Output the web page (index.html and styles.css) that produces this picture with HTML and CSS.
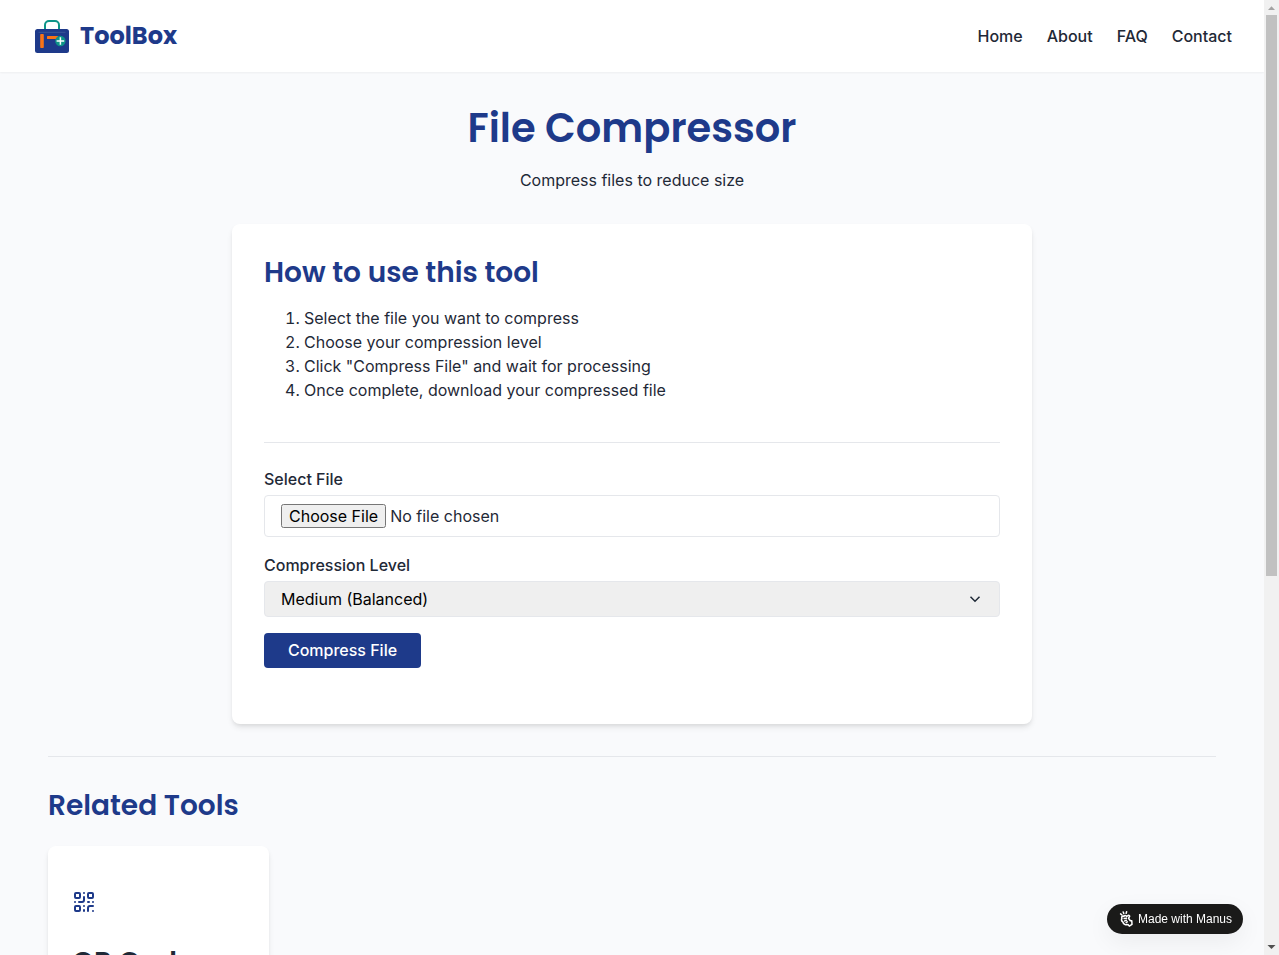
FILE: index.html
```html
<!DOCTYPE html>
<html lang="en">
<head>
<meta charset="utf-8">
<title>File Compressor - ToolBox</title>
<link rel="stylesheet" href="styles.css">
</head>
<body>
<div class="page">
  <header class="header">
    <a class="brand">
      <svg class="brand-logo" viewBox="0 0 40 40" fill="none">
        <path d="M13 13V9a4 4 0 0 1 4-4h6a4 4 0 0 1 4 4v4" stroke="#0d9488" stroke-width="2"/>
        <rect x="3" y="13" width="34" height="24" rx="2.500" fill="#1e3a8a"/>
        <path d="M6.500 16.300h27" stroke="#45639f" stroke-width=".7"/>
        <rect x="8.200" y="18" width="3.600" height="14" rx=".8" fill="#f97316"/>
        <rect x="15" y="20" width="11" height="3" rx=".5" fill="#f97316"/>
        <circle cx="28.400" cy="25" r="5.200" fill="#0d9488"/>
        <path d="M28.400 21.200v7.600M24.600 25h7.600" stroke="#fff" stroke-width="1.500"/>
      </svg>
      <span class="brand-name">ToolBox</span>
    </a>
    <nav class="nav"><a>Home</a><a>About</a><a>FAQ</a><a>Contact</a></nav>
  </header>
  <main class="main">
    <h1 class="title">File Compressor</h1>
    <p class="subtitle">Compress files to reduce size</p>
    <section class="tool">
      <h2 class="heading howto">How to use this tool</h2>
      <ol class="steps">
        <li>Select the file you want to compress</li>
        <li>Choose your compression level</li>
        <li>Click "Compress File" and wait for processing</li>
        <li>Once complete, download your compressed file</li>
      </ol>
      <form class="form">
        <label class="label" for="file">Select File</label>
        <input class="file" id="file" type="file">
        <label class="label" for="level">Compression Level</label>
        <div class="select-wrap">
          <select class="select" id="level"><option>Medium (Balanced)</option></select>
          <svg class="chevron" viewBox="0 0 16 16" fill="none" stroke="#1f2937" stroke-width="1.500"><path d="m3.500 5.700 4.500 4.500 4.500-4.500"/></svg>
        </div>
        <button class="submit" type="button">Compress File</button>
      </form>
    </section>
    <section class="related">
      <h2 class="heading related-heading">Related Tools</h2>
      <article class="card">
        <svg class="qr" viewBox="0 0 24 24" fill="none" stroke="#1e3a8a" stroke-width="2" stroke-linecap="round" stroke-linejoin="round"><rect width="5" height="5" x="3" y="3" rx="1"/><rect width="5" height="5" x="16" y="3" rx="1"/><rect width="5" height="5" x="3" y="16" rx="1"/><path d="M21 16h-3a2 2 0 0 0-2 2v3M21 21v.01M12 7v3a2 2 0 0 1-2 2H7M3 12h.01M12 3h.01M12 16v.01M16 12h1M21 12v.01M12 21v-1"/></svg>
        <h3 class="card-title">QR Code Generator</h3>
      </article>
    </section>
  </main>
</div>
<div class="badge">
  <svg class="badge-icon" viewBox="0 0 16 16" fill="none" stroke="#fff" stroke-width="1.500" stroke-linecap="round" stroke-linejoin="round"><path d="M1.600 2.900 2.900 4M4.200.9l.6 1.600M7.600.8 7.200 2.300"/><path d="M3 7.200C2.100 5.600 3.700 4.600 4.800 5.500 5.300 4.200 7.300 4.300 7.700 5.500L9 4.500c1.200-.5 2.100.7 1.300 1.500L9.500 7.200l1.800 2.600 1.500-.1.200 3.700-2.700 1.700-1.300-1.600C6.500 14.300 4.300 13 3.900 11 2.700 10.300 2.300 8.500 3 7.200ZM5.200 7.600l2.200-.4M5.700 9.900l1.800-.7M7.200 11.600l1-.8"/></svg>
  <span>Made with Manus</span>
</div>
<div class="scrollbar">
  <svg class="arrow" viewBox="0 0 15 15"><path d="M4 10 7.500 6.200 11 10z" fill="#a3a3a3"/></svg>
  <div class="thumb"></div>
  <svg class="arrow" viewBox="0 0 15 15"><path d="M3.500 5h8l-4 4z" fill="#505050"/></svg>
</div>
</body>
</html>
```
FILE: styles.css
```css
* { box-sizing: border-box; }
html, body { height: 100%; }
body { margin: 0; overflow: hidden; background: #f9fafc; color: #1f2937; font: 16px/24px Inter, "Liberation Sans", sans-serif; }
h1, h2, h3, p { margin: 0; }
.page { width: 1264px; height: 955px; overflow: hidden; }
.header { position: relative; display: flex; align-items: center; justify-content: space-between; height: 72px; padding: 0 32px; background: #fff; box-shadow: 0 1px 2px rgba(0,0,0,.05); }
.brand { display: flex; align-items: center; gap: 8px; }
.brand-logo { width: 40px; height: 40px; }
.brand-name { font: 700 24px/36px Poppins, Inter, sans-serif; color: #1e3a8a; }
.nav { display: flex; gap: 24px; font-weight: 500; }
.main { padding: 32px 48px; }
.title { font: 600 40px/48px Poppins, Inter, sans-serif; color: #1e3a8a; text-align: center; margin-bottom: 16px; }
.subtitle { text-align: center; margin-bottom: 32px; }
.tool { width: 800px; height: 500px; margin: 0 auto 32px; padding: 32px; background: #fff; border-radius: 8px; box-shadow: 0 4px 6px -1px rgba(0,0,0,.1), 0 2px 4px -1px rgba(0,0,0,.06); }
.heading { font: 600 28px/34px Poppins, Inter, sans-serif; color: #1e3a8a; }
.steps { margin: 16px 0 40px; padding-left: 40px; }
.form { display: flex; flex-direction: column; border-top: 1px solid #e5e7eb; padding-top: 24px; }
.label { font-weight: 500; margin-bottom: 4px; }
.file { height: 42px; margin-bottom: 16px; padding: 8px 16px; border: 1px solid #e5e7eb; border-radius: 4px; font: 16px Inter, sans-serif; color: inherit; }
.file::file-selector-button { font: 16px Inter, sans-serif; height: 24px; padding: 0 6px 2px; }
.select-wrap { position: relative; display: flex; margin-bottom: 16px; }
.select { appearance: none; width: 100%; height: 36px; padding: 0 16px; border: 1px solid #e5e7eb; border-radius: 4px; background: #efefef; color: #000; font: inherit; }
.chevron { position: absolute; right: 17px; top: 10px; width: 16px; height: 16px; }
.submit { align-self: flex-start; width: 157px; height: 35px; padding: 0 0 1px; border: 0; border-radius: 4px; background: #1e3a8a; color: #fff; font: 500 16px/24px Inter, sans-serif; }
.related { border-top: 1px solid #e5e7eb; padding-top: 32px; }
.related-heading { margin-bottom: 23px; }
.card { width: 221px; height: 260px; padding: 44px 24px 24px; background: #fff; border-radius: 8px; box-shadow: 0 4px 6px -1px rgba(0,0,0,.1), 0 2px 4px -1px rgba(0,0,0,.06); }
.qr { display: block; width: 24px; height: 24px; margin-bottom: 32px; }
.card-title { font: 600 28px/34px Poppins, Inter, sans-serif; }
.badge { position: fixed; left: 1107px; top: 904px; display: flex; align-items: center; gap: 3px; width: 136px; height: 30px; padding-left: 12px; border-radius: 15px; background: #1a1a19; color: #fff; font: 12px/18px "Liberation Sans", Arial, sans-serif; white-space: nowrap; box-shadow: 0 8px 24px rgba(0,0,0,.06); }
.badge-icon { width: 16px; height: 16px; flex: none; }
.scrollbar { position: fixed; right: 0; top: 0; display: flex; flex-direction: column; width: 15px; height: 955px; background: #f1f1f1; }
.arrow { width: 15px; height: 15px; }
.thumb { width: 11px; height: 561px; margin: 0 2px auto; background: #c1c1c1; }
```
